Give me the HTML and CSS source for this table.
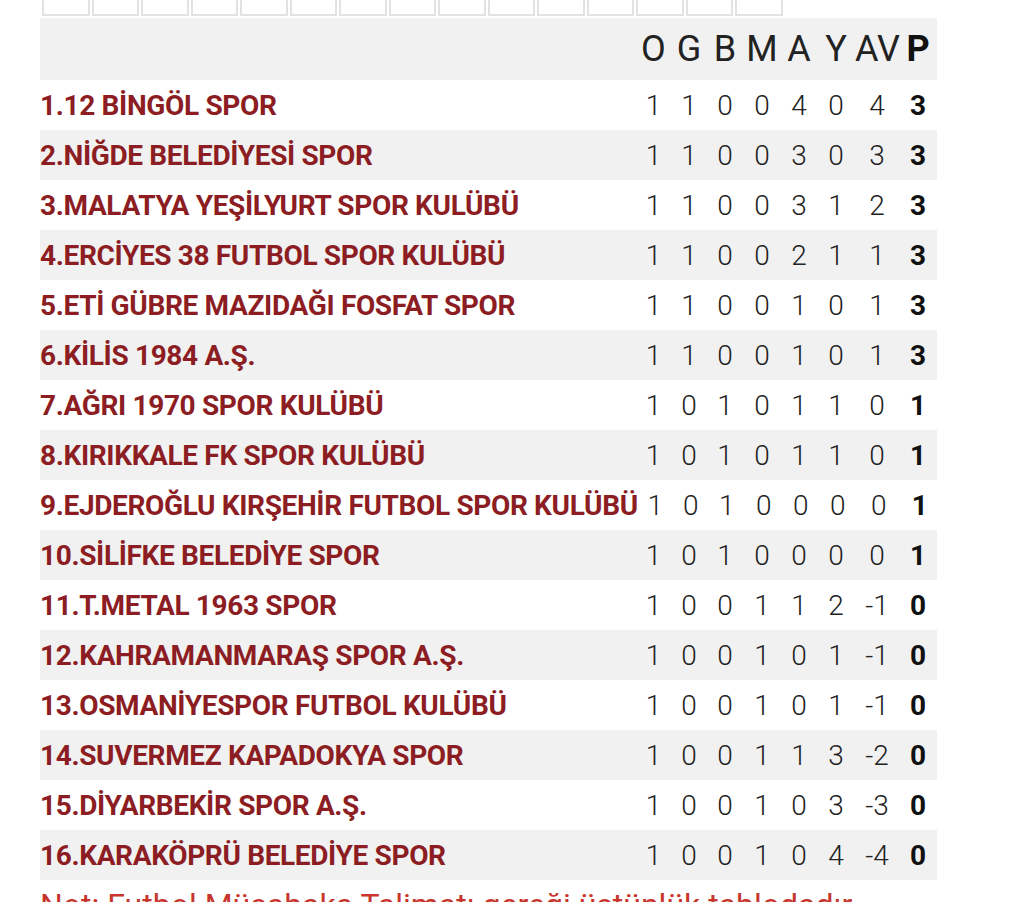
FILE: index.html
```html
<!DOCTYPE html>
<html lang="tr">
<head>
<meta charset="utf-8">
<title>Puan Durumu</title>
<link rel="stylesheet" href="styles.css">
</head>
<body>
<div class="page">
  <div class="strip">
    <span class="cell"></span><span class="cell"></span><span class="cell"></span><span class="cell"></span><span class="cell"></span>
    <span class="cell"></span><span class="cell"></span><span class="cell"></span><span class="cell"></span><span class="cell"></span>
    <span class="cell"></span><span class="cell"></span><span class="cell"></span><span class="cell"></span><span class="cell"></span>
  </div>
  <div class="standings">
    <div class="row head"><span class="team"></span><span>O</span><span>G</span><span>B</span><span>M</span><span>A</span><span>Y</span><span>AV</span><span class="pts">P</span></div>
    <div class="row"><span class="team">1.12 BİNGÖL SPOR</span><span>1</span><span>1</span><span>0</span><span>0</span><span>4</span><span>0</span><span>4</span><span class="pts">3</span></div>
    <div class="row"><span class="team">2.NİĞDE BELEDİYESİ SPOR</span><span>1</span><span>1</span><span>0</span><span>0</span><span>3</span><span>0</span><span>3</span><span class="pts">3</span></div>
    <div class="row"><span class="team">3.MALATYA YEŞİLYURT SPOR KULÜBÜ</span><span>1</span><span>1</span><span>0</span><span>0</span><span>3</span><span>1</span><span>2</span><span class="pts">3</span></div>
    <div class="row"><span class="team">4.ERCİYES 38 FUTBOL SPOR KULÜBÜ</span><span>1</span><span>1</span><span>0</span><span>0</span><span>2</span><span>1</span><span>1</span><span class="pts">3</span></div>
    <div class="row"><span class="team">5.ETİ GÜBRE MAZIDAĞI FOSFAT SPOR</span><span>1</span><span>1</span><span>0</span><span>0</span><span>1</span><span>0</span><span>1</span><span class="pts">3</span></div>
    <div class="row"><span class="team">6.KİLİS 1984 A.Ş.</span><span>1</span><span>1</span><span>0</span><span>0</span><span>1</span><span>0</span><span>1</span><span class="pts">3</span></div>
    <div class="row"><span class="team">7.AĞRI 1970 SPOR KULÜBÜ</span><span>1</span><span>0</span><span>1</span><span>0</span><span>1</span><span>1</span><span>0</span><span class="pts">1</span></div>
    <div class="row"><span class="team">8.KIRIKKALE FK SPOR KULÜBÜ</span><span>1</span><span>0</span><span>1</span><span>0</span><span>1</span><span>1</span><span>0</span><span class="pts">1</span></div>
    <div class="row"><span class="team">9.EJDEROĞLU KIRŞEHİR FUTBOL SPOR KULÜBÜ</span><span>1</span><span>0</span><span>1</span><span>0</span><span>0</span><span>0</span><span>0</span><span class="pts">1</span></div>
    <div class="row"><span class="team">10.SİLİFKE BELEDİYE SPOR</span><span>1</span><span>0</span><span>1</span><span>0</span><span>0</span><span>0</span><span>0</span><span class="pts">1</span></div>
    <div class="row"><span class="team">11.T.METAL 1963 SPOR</span><span>1</span><span>0</span><span>0</span><span>1</span><span>1</span><span>2</span><span>-1</span><span class="pts">0</span></div>
    <div class="row"><span class="team">12.KAHRAMANMARAŞ SPOR A.Ş.</span><span>1</span><span>0</span><span>0</span><span>1</span><span>0</span><span>1</span><span>-1</span><span class="pts">0</span></div>
    <div class="row"><span class="team">13.OSMANİYESPOR FUTBOL KULÜBÜ</span><span>1</span><span>0</span><span>0</span><span>1</span><span>0</span><span>1</span><span>-1</span><span class="pts">0</span></div>
    <div class="row"><span class="team">14.SUVERMEZ KAPADOKYA SPOR</span><span>1</span><span>0</span><span>0</span><span>1</span><span>1</span><span>3</span><span>-2</span><span class="pts">0</span></div>
    <div class="row"><span class="team">15.DİYARBEKİR SPOR A.Ş.</span><span>1</span><span>0</span><span>0</span><span>1</span><span>0</span><span>3</span><span>-3</span><span class="pts">0</span></div>
    <div class="row"><span class="team">16.KARAKÖPRÜ BELEDİYE SPOR</span><span>1</span><span>0</span><span>0</span><span>1</span><span>0</span><span>4</span><span>-4</span><span class="pts">0</span></div>
  </div>
  <p class="note">Not: Futbol Müsabaka Talimatı gereği üstünlük tablodadır.</p>
</div>
</body>
</html>
```
FILE: styles.css
```css
html, body {
  margin: 0;
  padding: 0;
  background: #ffffff;
}

.page {
  padding-left: 40px;
  font-family: Roboto, "Liberation Sans", sans-serif;
  color: #222222;
}

.strip {
  display: flex;
  gap: 2px;
  margin-left: 2px;
  height: 16px;
}

.cell {
  width: 47.5px;
  box-sizing: border-box;
  border: 2px solid #e2e2e2;
  border-top: none;
}

.standings {
  width: 897px;
  margin-top: 2px;
}

.row {
  display: grid;
  grid-template-columns: 1fr 35px 36px 36px 38px 36px 38px 44px 38px;
  align-items: center;
  height: 50px;
  font-size: 28px;
  font-weight: 300;
  text-align: center;
}

.row:nth-child(odd) {
  background: #f1f1f1;
}

.row.head {
  height: 62px;
  font-size: 36px;
  font-weight: 400;
}

.team {
  text-align: left;
  font-weight: 700;
  color: #8c1d23;
  letter-spacing: -0.35px;
  white-space: nowrap;
}

.pts {
  font-weight: 700;
  color: #111111;
}

.note {
  margin: 6px 0 0 0;
  padding-right: 40px;
  font-size: 32px;
  color: #c8352c;
}
```
